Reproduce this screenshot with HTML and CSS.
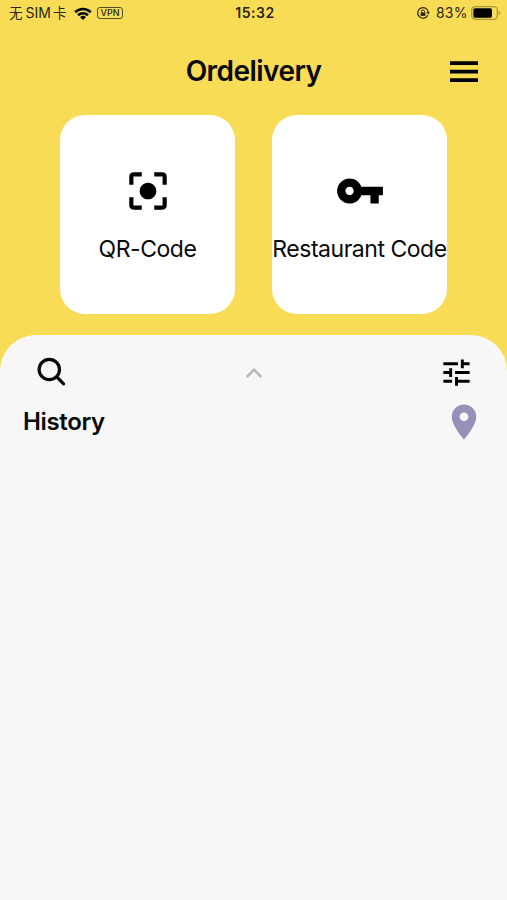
FILE: index.html
```html
<!DOCTYPE html>
<html lang="en">
<head>
  <meta charset="UTF-8" />
  <title>Ordelivery</title>
  <link rel="stylesheet" href="styles.css">
</head>
<body>

  <div class="status-bar">
    <div class="status-left">
      <span class="carrier">无<span class="sim">SIM</span>卡</span>
      <svg class="wifi" viewBox="0 0 18 13">
        <path d="M0.3 4.3a12.3 12.3 0 0 1 17.4 0l-1.8 1.9a9.8 9.8 0 0 0-13.8 0z"/>
        <path d="M3.2 7.3a8.2 8.2 0 0 1 11.6 0l-1.8 1.9a5.7 5.7 0 0 0-8 0z"/>
        <path d="M6.1 10.3a4.1 4.1 0 0 1 5.8 0L9 13z"/>
      </svg>
      <span class="vpn">VPN</span>
    </div>
    <span class="time">15:32</span>
    <div class="status-right">
      <svg class="lock" viewBox="0 0 14 14">
        <path d="M11.8 9.2A5.3 5.3 0 1 1 12.3 6.5" fill="none" stroke="#29260f" stroke-width="1.2"/>
        <path d="M10.4 6.1h3.4L12.2 8.6z"/>
        <path d="M4.6 6.4h4.8v3.5H4.6z"/>
        <path d="M5.5 6.6V5.5a1.5 1.5 0 0 1 3 0v1.1" fill="none" stroke="#29260f"/>
      </svg>
      <span class="percent">83%</span>
      <svg class="battery" viewBox="0 0 30 14">
        <rect x="0.7" y="0.7" width="25.6" height="12.6" rx="3.6" fill="none" stroke="#aa983f" stroke-width="1.3"/>
        <rect x="2.4" y="2.3" width="18.6" height="9.4" rx="1.6" fill="#000"/>
        <path d="M27.6 4.6a2.7 2.7 0 0 1 0 4.8z" fill="#aa983f"/>
      </svg>
    </div>
  </div>

  <header class="header">
    <h1>Ordelivery</h1>
    <svg class="menu" viewBox="0 0 28 22">
      <path d="M0 0.3h28v3.8H0zM0 8.8h28v3.8H0zM0 17.3h28v3.8H0z"/>
    </svg>
  </header>

  <div class="cards">
    <div class="card">
      <svg viewBox="0 0 24 24">
        <path d="M12 8c-2.21 0-4 1.79-4 4s1.79 4 4 4 4-1.79 4-4-1.79-4-4-4zm-7 7H3v4c0 1.1.9 2 2 2h4v-2H5v-4zM5 5h4V3H5c-1.1 0-2 .9-2 2v4h2V5zm14-2h-4v2h4v4h2V5c0-1.1-.9-2-2-2zm0 16h-4v2h4c1.1 0 2-.9 2-2v-4h-2v4z"/>
      </svg>
      <span>QR-Code</span>
    </div>
    <div class="card">
      <svg viewBox="0 0 24 24">
        <path d="M12.65 10C11.83 7.67 9.61 6 7 6c-3.31 0-6 2.69-6 6s2.69 6 6 6c2.61 0 4.83-1.67 5.65-4H17v4h4v-4h2v-4H12.65zM7 14c-1.1 0-2-.9-2-2s.9-2 2-2 2 .9 2 2-.9 2-2 2z"/>
      </svg>
      <span>Restaurant Code</span>
    </div>
  </div>

  <main class="sheet">
    <div class="toolbar">
      <svg class="search" viewBox="0 0 30 30">
        <circle cx="12.3" cy="12.5" r="10.2"/>
        <path d="M19.8 20L26.6 26.8"/>
      </svg>
      <svg class="chevron" viewBox="0 0 18 12">
        <path d="M1.7 10L9 2.8l7.3 7.2"/>
      </svg>
      <svg class="tune" viewBox="0 0 24 24">
        <path d="M3 17v2h6v-2H3zM3 5v2h10V5H3zm10 16v-2h8v-2h-8v-2h-2v6h2zM7 9v2H3v2h4v2h2V9H7zm14 4v-2H11v2h10zm-6-4h2V7h4V5h-4V3h-2v6z"/>
      </svg>
    </div>
    <div class="history">
      <h2>History</h2>
      <svg class="pin" viewBox="0 0 24 24">
        <path d="M12 2C8.13 2 5 5.13 5 9c0 5.25 7 13 7 13s7-7.75 7-13c0-3.87-3.13-7-7-7zm0 9.5c-1.38 0-2.5-1.12-2.5-2.5s1.12-2.5 2.5-2.5 2.5 1.12 2.5 2.5-1.12 2.5-2.5 2.5z"/>
      </svg>
    </div>
  </main>

</body>
</html>
```
FILE: styles.css
```css
* {
  box-sizing: border-box;
}
body {
  margin: 0;
  height: 900px;
  display: flex;
  flex-direction: column;
  overflow: hidden;
  background: #f9dc56;
  color: #090909;
  font-family: Inter, "Noto Sans CJK SC", sans-serif;
}
svg {
  display: block;
  flex: none;
}
.status-bar {
  height: 27px;
  padding: 0 6px 1px 9px;
  display: grid;
  grid-template-columns: 1fr auto 1fr;
  align-items: center;
  font-size: 14px;
  line-height: 26px;
  color: #29260f;
}
.status-left,
.status-right {
  display: flex;
  align-items: center;
}
.status-right {
  justify-content: flex-end;
}
.carrier {
  width: 59px;
  white-space: nowrap;
  font-size: 13.5px;
}
.sim {
  margin: 0 2px 0 3px;
  font-size: 14px;
}
.wifi {
  width: 18px;
  height: 13px;
  margin: 0 5px 0 6px;
  fill: #000;
}
.vpn {
  width: 26px;
  height: 12px;
  border: 1px solid #574e20;
  border-radius: 3px;
  font-size: 9px;
  font-weight: 500;
  line-height: 10px;
  text-align: center;
}
.time {
  font-weight: 600;
  letter-spacing: 0.5px;
}
.lock {
  width: 14px;
  height: 14px;
  margin-right: 6px;
  fill: #29260f;
}
.percent {
  width: 35px;
  letter-spacing: 0.2px;
}
.battery {
  width: 30px;
  height: 14px;
}
.header {
  height: 88px;
  padding: 0 29px;
  display: grid;
  grid-template-columns: 1fr auto 1fr;
  align-items: center;
}
h1 {
  grid-column: 2;
  margin: 0;
  font-size: 28px;
  font-weight: 600;
  line-height: 34px;
  letter-spacing: -0.55px;
}
.menu {
  width: 28px;
  height: 22px;
  margin-top: 2px;
  justify-self: end;
}
.cards {
  display: flex;
  justify-content: center;
  gap: 37px;
}
.card {
  width: 175px;
  height: 199px;
  padding-top: 51px;
  display: flex;
  flex-direction: column;
  align-items: center;
  background: #fff;
  border-radius: 25px;
}
.card svg {
  width: 50px;
  height: 50px;
}
.card span {
  margin-top: 19px;
  font-size: 23px;
  line-height: 28px;
  letter-spacing: -0.47px;
  white-space: nowrap;
}
.sheet {
  flex: 1;
  margin-top: 21px;
  padding: 19px 22px 0 23px;
  background: #f7f7f7;
  border-radius: 36px 36px 0 0;
}
.toolbar {
  height: 37px;
  padding: 0 11px 0 14px;
  display: flex;
  align-items: center;
  justify-content: space-between;
}
.search {
  width: 30px;
  height: 30px;
  margin: 0 2px 1px 0;
  fill: none;
  stroke: #090909;
  stroke-width: 3.2;
  stroke-linecap: round;
}
.chevron {
  width: 18px;
  height: 12px;
  fill: none;
  stroke: #b9b9b9;
  stroke-width: 2.5;
}
.tune {
  width: 35px;
  height: 35px;
}
.history {
  height: 62px;
  display: flex;
  align-items: center;
  justify-content: space-between;
}
h2 {
  margin: 0 0 2px;
  font-size: 24px;
  font-weight: 600;
  letter-spacing: -0.35px;
}
.pin {
  width: 42px;
  height: 42px;
  fill: #9890b9;
}
```
